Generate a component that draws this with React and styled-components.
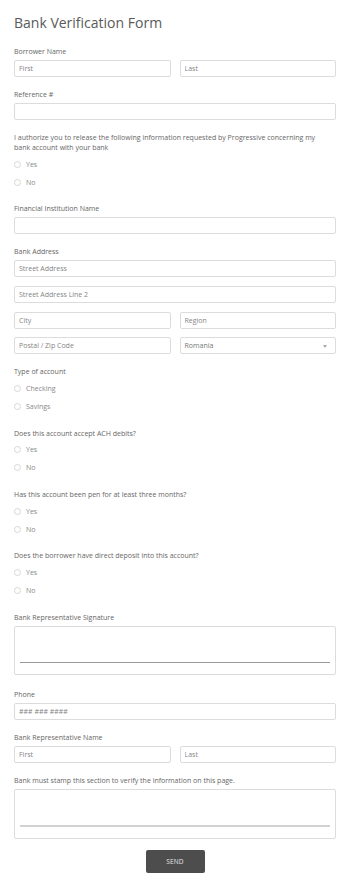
import React from 'react';
import styled, { createGlobalStyle } from 'styled-components';

const GlobalStyle = createGlobalStyle`
  html, body {
    margin: 0;
    padding: 0;
    background: #ffffff;
  }
  body {
    font-family: "Open Sans", "DejaVu Sans", sans-serif;
    color: #555;
  }
  * {
    box-sizing: border-box;
  }
`;

const Page = styled.form`
  width: 350px;
  padding: 13px 14px 14px 14px;
  display: flex;
  flex-direction: column;
  gap: 13px;
`;

const Title = styled.h1`
  margin: 0 0 1px 0;
  font-size: 14px;
  line-height: 20px;
  font-weight: 400;
  color: #5a5a5a;
`;

const Field = styled.div`
  display: flex;
  flex-direction: column;
  margin-top: ${(p) => p.$offset || 0}px;
`;

const Label = styled.label`
  display: block;
  font-size: 7px;
  line-height: 10px;
  color: #666;
  margin-bottom: ${(p) => (p.$radio ? 2 : 3)}px;
  padding-right: ${(p) => (p.$wrap ? 8 : 0)}px;
`;

const Row = styled.div`
  display: grid;
  grid-template-columns: 1fr 1fr;
  gap: 9px;
`;

const Stack = styled.div`
  display: flex;
  flex-direction: column;
  gap: 8.6px;
`;

const Input = styled.input`
  width: 100%;
  height: 17px;
  margin: 0;
  padding: 0 4px;
  border: 1px solid #dcdcdc;
  border-radius: 2px;
  background: #fff;
  font-family: "Open Sans", "DejaVu Sans", sans-serif;
  font-size: 7px;
  color: #666;
  outline: none;

  &::placeholder {
    color: #858585;
  }
`;

const SelectBox = styled.div`
  position: relative;
  height: 17px;
  border: 1px solid #dcdcdc;
  border-radius: 2px;
  display: flex;
  align-items: center;
  padding: 0 4px;
  font-size: 7px;
  color: #777;
`;

const Caret = styled.svg`
  position: absolute;
  right: 8px;
  top: 7px;
  width: 4px;
  height: 3px;
`;

const RadioList = styled.div`
  display: flex;
  flex-direction: column;
`;

const RadioRow = styled.label`
  display: flex;
  align-items: center;
  gap: 5px;
  height: 18.2px;
  font-size: 7px;
  color: #888;
`;

const RadioDot = styled.input`
  appearance: none;
  -webkit-appearance: none;
  margin: 0;
  width: 7px;
  height: 7px;
  border: 1px solid #d6d6d6;
  border-radius: 50%;
  background: #fff;
`;

const SignPad = styled.div`
  height: ${(p) => p.$height}px;
  border: 1px solid #dcdcdc;
  border-radius: 2px;
  padding: 0 5px;
  display: flex;
  flex-direction: column;
  justify-content: flex-start;
`;

const SignLine = styled.div`
  margin-top: ${(p) => p.$top}px;
  height: ${(p) => p.$thick}px;
  background: ${(p) => p.$color};
`;

const Actions = styled.div`
  display: flex;
  justify-content: center;
  margin-top: -2px;
`;

const SendButton = styled.button`
  width: 59px;
  height: 23px;
  border: none;
  border-radius: 2px;
  background: #4d4d4d;
  color: #e6e6e6;
  font-family: "Open Sans", "DejaVu Sans", sans-serif;
  font-size: 6.5px;
  letter-spacing: 0.2px;
  padding: 0;
`;

const RadioGroup = ({ label, options, name, wrap }) => (
  <Field>
    <Label $radio $wrap={wrap}>{label}</Label>
    <RadioList>
      {options.map((opt) => (
        <RadioRow key={opt}>
          <RadioDot type="radio" name={name} />
          {opt}
        </RadioRow>
      ))}
    </RadioList>
  </Field>
);

const App = () => (
  <>
    <GlobalStyle />
    <Page onSubmit={(e) => e.preventDefault()}>
      <Title>Bank Verification Form</Title>

      <Field>
        <Label>Borrower Name</Label>
        <Row>
          <Input placeholder="First" />
          <Input placeholder="Last" />
        </Row>
      </Field>

      <Field>
        <Label>Reference #</Label>
        <Input />
      </Field>

      <RadioGroup
        name="authorize"
        wrap
        label="I authorize you to release the following information requested by Progressive concerning my bank account with your bank"
        options={['Yes', 'No']}
      />

      <Field>
        <Label>Financial Institution Name</Label>
        <Input />
      </Field>

      <Field>
        <Label>Bank Address</Label>
        <Stack>
          <Input placeholder="Street Address" />
          <Input placeholder="Street Address Line 2" />
          <Row>
            <Input placeholder="City" />
            <Input placeholder="Region" />
          </Row>
          <Row>
            <Input placeholder="Postal / Zip Code" />
            <SelectBox>
              Romania
              <Caret viewBox="0 0 4 3">
                <path d="M0 0 L4 0 L2 3 Z" fill="#aaa" />
              </Caret>
            </SelectBox>
          </Row>
        </Stack>
      </Field>

      <RadioGroup name="type" label="Type of account" options={['Checking', 'Savings']} />
      <RadioGroup name="ach" label="Does this account accept ACH debits?" options={['Yes', 'No']} />
      <RadioGroup name="open" label="Has this account been pen for at least three months?" options={['Yes', 'No']} />
      <RadioGroup name="deposit" label="Does the borrower have direct deposit into this account?" options={['Yes', 'No']} />

      <Field>
        <Label>Bank Representative Signature</Label>
        <SignPad $height={49}>
          <SignLine $top={35} $thick={1} $color="#9a9a9a" />
        </SignPad>
      </Field>

      <Field $offset={2}>
        <Label>Phone</Label>
        <Input placeholder="### ### ####" />
      </Field>

      <Field>
        <Label>Bank Representative Name</Label>
        <Row>
          <Input placeholder="First" />
          <Input placeholder="Last" />
        </Row>
      </Field>

      <Field>
        <Label>Bank must stamp this section to verify the information on this page.</Label>
        <SignPad $height={50}>
          <SignLine $top={35} $thick={2} $color="#d2d2d2" />
        </SignPad>
      </Field>

      <Actions>
        <SendButton type="submit">SEND</SendButton>
      </Actions>
    </Page>
  </>
);

export default App;
